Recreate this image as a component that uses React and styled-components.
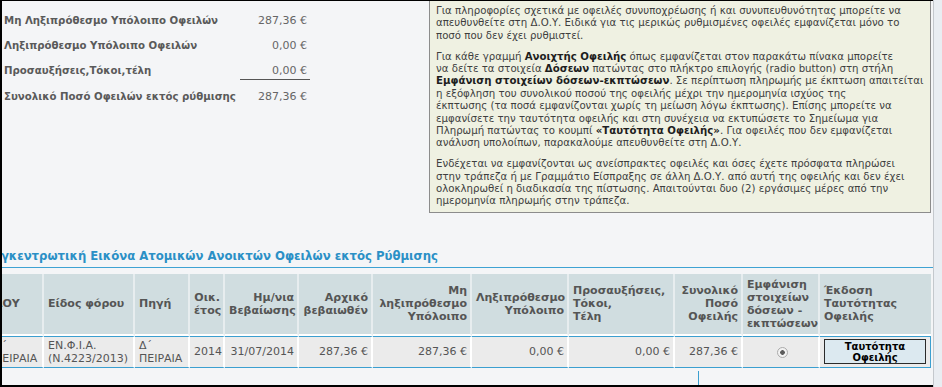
import React from 'react';
import styled, { createGlobalStyle } from 'styled-components';

const GlobalStyle = createGlobalStyle`
  html, body {
    margin: 0;
    padding: 0;
    background: #f4f5f7;
  }
  body {
    font-family: "DejaVu Sans", Verdana, sans-serif;
    font-size: 11px;
    color: #555;
  }
`;

const Frame = styled.div`
  display: flex;
  width: 942px;
  height: 387px;
  overflow: hidden;
`;

const Main = styled.div`
  flex: 1;
  box-sizing: border-box;
  height: 387px;
  border-left: 2px solid #000;
  border-top: 1px solid #000;
  border-bottom: 2px solid #000;
  overflow: hidden;
`;

const ScrollStrip = styled.div`
  width: 8px;
  border-left: 1px solid #c4c8cd;
  background: #e9edf2;
`;

const Top = styled.div`
  display: flex;
  align-items: flex-start;
`;

const Summary = styled.div`
  width: 425px;
  display: grid;
  grid-template-columns: 236px 70px;
  row-gap: 9px;
  padding: 12px 0 0 2px;
`;

const Label = styled.div`
  font-size: 10.2px;
  font-weight: bold;
  line-height: 16px;
  color: #5a5a5a;
  white-space: nowrap;
`;

const Value = styled.div`
  line-height: 16px;
  text-align: right;
  padding-right: 3px;
  color: #666;
  border-bottom: ${({ $underline }) => ($underline ? '1px solid #555' : 'none')};
`;

const InfoBox = styled.div`
  width: 488px;
  padding: 4px 6px 4px 6px;
  background: #eff1e2;
  border: 1px solid #8c8c8c;
  border-top: none;
  color: #3e3e3e;
  font-size: 10.2px;
  line-height: 12.4px;
`;

const Para = styled.p`
  margin: 0 0 8.4px 0;

  &:last-child {
    margin-bottom: 0;
  }

  b {
    color: #1e1e1e;
  }
`;

const Line = styled.span`
  display: block;
  white-space: nowrap;
`;

const Lower = styled.div`
  margin-left: -20px;
`;

const Heading = styled.h2`
  margin: 35px 0 0 0;
  padding: 0 0 3px 3px;
  font-size: 11.7px;
  line-height: 16px;
  font-weight: bold;
  color: #2b90c6;
  border-bottom: 1px solid #3ea2d3;
  white-space: nowrap;
`;

const Table = styled.table`
  margin: 6px 0 0 8px;
  table-layout: fixed;
  width: 941px;
  border-collapse: separate;
  border-spacing: 0;
`;

const Th = styled.th`
  background: #d0dde0;
  color: #555;
  font-weight: bold;
  font-size: 11px;
  line-height: 13px;
  padding: 4px 3px 4px 4px;
  vertical-align: middle;
  text-align: ${({ $align }) => $align || 'left'};
  border-right: 2px solid #e7edef;
  border-bottom: 2px solid #fff;
  white-space: nowrap;

  &:last-child {
    border-right: none;
  }
`;

const Td = styled.td`
  background: #ebebeb;
  color: #555;
  line-height: 13px;
  padding: 2px 3px 2px 4px;
  vertical-align: middle;
  text-align: ${({ $align }) => $align || 'left'};
  border-top: 1px solid #3b9fd0;
  border-bottom: 1px solid #3b9fd0;
  border-right: 2px solid #fff;
  white-space: nowrap;

  &:last-child {
    border-right: 1px solid #3b9fd0;
  }
`;

const Radio = styled.span`
  display: inline-block;
  box-sizing: border-box;
  width: 11px;
  height: 11px;
  border-radius: 50%;
  border: 1px solid #ababab;
  background: radial-gradient(circle, #5c5c5c 0 2px, #f2f2f2 2.6px);
  vertical-align: middle;
  margin-left: 2px;
`;

const IdButton = styled.button`
  display: block;
  margin: 0;
  width: 102px;
  height: 25px;
  padding: 0;
  font-family: "DejaVu Sans", Verdana, sans-serif;
  font-size: 10px;
  font-weight: bold;
  line-height: 11px;
  color: #000;
  background: #dce9f0;
  border: 1px solid #2a2a2a;
`;

const Pager = styled.div`
  margin: 3px 0 0 716px;
  height: 20px;
  border-left: 1px solid #3b9fd0;
`;

const widths = [54, 91, 55, 35, 74, 74, 99, 97, 106, 68, 77, 111];

const headers = [
  { lines: ['ΔΟΥ'] },
  { lines: ['Είδος φόρου'] },
  { lines: ['Πηγή'] },
  { lines: ['Οικ.', 'έτος'], align: 'right' },
  { lines: ['Ημ/νια', 'Βεβαίωσης'], align: 'right' },
  { lines: ['Αρχικό', 'βεβαιωθέν'], align: 'right' },
  { lines: ['Μη', 'ληξιπρόθεσμο', 'Υπόλοιπο'], align: 'right' },
  { lines: ['Ληξιπρόθεσμο', 'Υπόλοιπο'], align: 'right' },
  { lines: ['Προσαυξήσεις,', 'Τόκοι,', 'Τέλη'] },
  { lines: ['Συνολικό', 'Ποσό', 'Οφειλής'], align: 'right' },
  { lines: ['Εμφάνιση', 'στοιχείων', 'δόσεων -', 'εκπτώσεων'] },
  { lines: ['Έκδοση', 'Ταυτότητας', 'Οφειλής'] },
];

const row = [
  { lines: ['Δ΄', 'ΠΕΙΡΑΙΑ'] },
  { lines: ['ΕΝ.Φ.Ι.Α.', '(Ν.4223/2013)'] },
  { lines: ['Δ΄', 'ΠΕΙΡΑΙΑ'] },
  { lines: ['2014'], align: 'right' },
  { lines: ['31/07/2014'], align: 'right' },
  { lines: ['287,36 €'], align: 'right' },
  { lines: ['287,36 €'], align: 'right' },
  { lines: ['0,00 €'], align: 'right' },
  { lines: ['0,00 €'], align: 'right' },
  { lines: ['287,36 €'], align: 'right' },
];

const summary = [
  ['Μη Ληξιπρόθεσμο Υπόλοιπο Οφειλών', '287,36 €'],
  ['Ληξιπρόθεσμο Υπόλοιπο Οφειλών', '0,00 €'],
  ['Προσαυξήσεις,Τόκοι,τέλη', '0,00 €', true],
  ['Συνολικό Ποσό Οφειλών εκτός ρύθμισης', '287,36 €'],
];

const withBreaks = (lines) =>
  lines.map((l, i) => (
    <React.Fragment key={i}>
      {i > 0 && <br />}
      {l}
    </React.Fragment>
  ));

const App = () => (
  <>
    <GlobalStyle />
    <Frame>
      <Main>
        <Top>
          <Summary>
            {summary.map(([label, value, underline]) => (
              <React.Fragment key={label}>
                <Label>{label}</Label>
                <Value $underline={underline}>{value}</Value>
              </React.Fragment>
            ))}
          </Summary>
          <InfoBox>
            <Para>
              <Line>Για πληροφορίες σχετικά με οφειλές συνυποχρέωσης ή και συνυπευθυνότητας μπορείτε να</Line>
              <Line>απευθυνθείτε στη Δ.Ο.Υ. Ειδικά για τις μερικώς ρυθμισμένες οφειλές εμφανίζεται μόνο το</Line>
              <Line>ποσό που δεν έχει ρυθμιστεί.</Line>
            </Para>
            <Para>
              <Line>Για κάθε γραμμή <b>Ανοιχτής Οφειλής</b> όπως εμφανίζεται στον παρακάτω πίνακα μπορείτε</Line>
              <Line>να δείτε τα στοιχεία <b>Δόσεων</b> πατώντας στο πλήκτρο επιλογής (radio button) στη στήλη</Line>
              <Line><b>Εμφάνιση στοιχείων δόσεων-εκπτώσεων</b>. Σε περίπτωση πληρωμής με έκπτωση απαιτείται</Line>
              <Line>η εξόφληση του συνολικού ποσού της οφειλής μέχρι την ημερομηνία ισχύος της</Line>
              <Line>έκπτωσης (τα ποσά εμφανίζονται χωρίς τη μείωση λόγω έκπτωσης). Επίσης μπορείτε να</Line>
              <Line>εμφανίσετε την ταυτότητα οφειλής και στη συνέχεια να εκτυπώσετε το Σημείωμα για</Line>
              <Line>Πληρωμή πατώντας το κουμπί <b>«Ταυτότητα Οφειλής»</b>. Για οφειλές που δεν εμφανίζεται</Line>
              <Line>ανάλυση υπολοίπων, παρακαλούμε απευθυνθείτε στη Δ.Ο.Υ.</Line>
            </Para>
            <Para>
              <Line>Ενδέχεται να εμφανίζονται ως ανείσπρακτες οφειλές και όσες έχετε πρόσφατα πληρώσει</Line>
              <Line>στην τράπεζα ή με Γραμμάτιο Είσπραξης σε άλλη Δ.Ο.Υ. από αυτή της οφειλής και δεν έχει</Line>
              <Line>ολοκληρωθεί η διαδικασία της πίστωσης. Απαιτούνται δυο (2) εργάσιμες μέρες από την</Line>
              <Line>ημερομηνία πληρωμής στην τράπεζα.</Line>
            </Para>
          </InfoBox>
        </Top>
        <Lower>
          <Heading>Συγκεντρωτική Εικόνα Ατομικών Ανοικτών Οφειλών εκτός Ρύθμισης</Heading>
          <Table>
            <colgroup>
              {widths.map((w, i) => (
                <col key={i} style={{ width: w }} />
              ))}
            </colgroup>
            <thead>
              <tr>
                {headers.map((h, i) => (
                  <Th key={i} $align={h.align}>{withBreaks(h.lines)}</Th>
                ))}
              </tr>
            </thead>
            <tbody>
              <tr>
                {row.map((c, i) => (
                  <Td key={i} $align={c.align}>{withBreaks(c.lines)}</Td>
                ))}
                <Td $align="center"><Radio /></Td>
                <Td><IdButton type="button">Ταυτότητα<br />Οφειλής</IdButton></Td>
              </tr>
            </tbody>
          </Table>
          <Pager />
        </Lower>
      </Main>
      <ScrollStrip />
    </Frame>
  </>
);

export default App;
